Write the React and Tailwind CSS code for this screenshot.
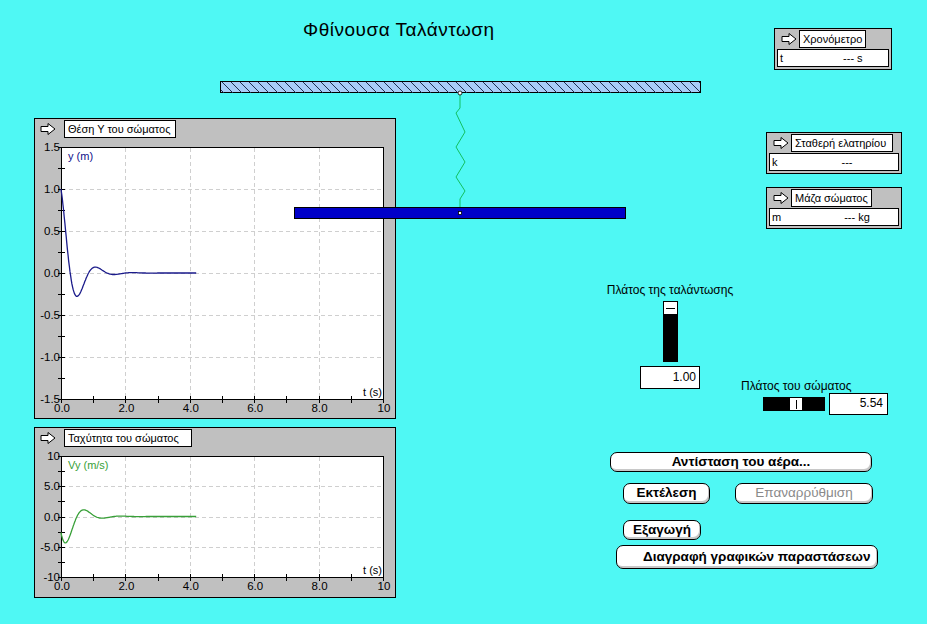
import React from 'react'

const font = { fontFamily: '"Liberation Sans", Arial, sans-serif' }

const Arrow = () => (
    <svg width="16" height="12" viewBox="0 0 16 12" className="shrink-0">
        <polygon
            points="1,3.5 8,3.5 8,0.5 15,6 8,11.5 8,8.5 1,8.5"
            fill="white"
            stroke="black"
            strokeWidth="1"
        />
    </svg>
)

const TabLabel = ({ children, width }) => (
    <div
        className="h-[18px] border border-black bg-white px-[3px] text-[11px] leading-[16px] text-black whitespace-nowrap"
        style={{ width }}
    >
        {children}
    </div>
)

// damped oscillation, y(t) and its velocity
const K = 2.4
const W = 5.5
const yAt = (t) => Math.exp(-K * t) * Math.cos(W * t)
const vAt = (t) => -Math.exp(-K * t) * (K * Math.cos(W * t) + W * Math.sin(W * t)) * 1.1

const Chart = ({ height, plotH, yTicks, yLabels, fn, yMin, yMax, color, label, labelColor }) => {
    const px = 26
    const py = 10
    const pw = 322
    const toX = (t) => px + (t / 10) * pw
    const toY = (v) => py + ((yMax - v) / (yMax - yMin)) * plotH
    const pts = []
    for (let t = 0; t <= 4.2; t += 0.02) pts.push(`${toX(t).toFixed(1)},${toY(fn(t)).toFixed(1)}`)
    const divs = yLabels.length - 1
    return (
        <svg width="360" height={height} className="block" style={font}>
            <rect x={px + 0.5} y={py + 0.5} width={pw} height={plotH} fill="white" stroke="black" />
            {[1, 2, 3, 4].map((i) => (
                <line
                    key={'gx' + i}
                    x1={Math.round(px + (i * pw) / 5) + 0.5}
                    x2={Math.round(px + (i * pw) / 5) + 0.5}
                    y1={py + 1}
                    y2={py + plotH}
                    stroke="#cfcfcf"
                    strokeDasharray="4 3"
                />
            ))}
            {yLabels.slice(1, -1).map((_, i) => (
                <line
                    key={'gy' + i}
                    x1={px + 1}
                    x2={px + pw}
                    y1={Math.round(py + ((i + 1) * plotH) / divs) + 0.5}
                    y2={Math.round(py + ((i + 1) * plotH) / divs) + 0.5}
                    stroke="#cfcfcf"
                    strokeDasharray="4 3"
                />
            ))}
            {Array.from({ length: yTicks + 1 }).map((_, i) => {
                const y = Math.round(py + (i * plotH) / yTicks) + 0.5
                return <line key={'ty' + i} x1={px - 3} x2={px + 4} y1={y} y2={y} stroke="black" />
            })}
            {Array.from({ length: 11 }).map((_, i) => {
                const x = Math.round(toX(i)) + 0.5
                return <line key={'tx' + i} x1={x} x2={x} y1={py + plotH - 3} y2={py + plotH + 4} stroke="black" />
            })}
            {yLabels.map((l, i) => (
                <text
                    key={'ly' + i}
                    x={px - 1}
                    y={py + (i * plotH) / divs + 4}
                    fontSize="11.5"
                    textAnchor="end"
                    fill="black"
                >
                    {l}
                </text>
            ))}
            {['0.0', '2.0', '4.0', '6.0', '8.0', '10'].map((l, i) => (
                <text key={'lx' + i} x={toX(i * 2) + 1} y={py + plotH + 13} fontSize="11.5" textAnchor="middle" fill="black">
                    {l}
                </text>
            ))}
            <text x={px + pw - 1} y={py + plotH - 3} fontSize="11" textAnchor="end" fill="black">
                t (s)
            </text>
            <text x={px + 7} y={py + 13} fontSize="11" fill={labelColor}>
                {label}
            </text>
            <polyline points={pts.join(' ')} fill="none" stroke={color} strokeWidth="1.3" />
        </svg>
    )
}

const GraphPanel = ({ height, title, titleWidth, children }) => (
    <div className="w-[362px] border border-black bg-[#c0c0c0]" style={{ height }}>
        <div className="flex h-[18px] items-center gap-[8px] pt-[1px] pl-[5px]">
            <Arrow />
            <TabLabel width={titleWidth}>{title}</TabLabel>
        </div>
        {children}
    </div>
)

const InfoBox = ({ className = '', title, titleWidth, name, value, valueGap }) => (
    <div className={`flex h-[42px] flex-col border border-black bg-[#c0c0c0] ${className}`}>
        <div className="flex items-center gap-[2px] pt-[1px] pl-[6px]">
            <Arrow />
            <TabLabel width={titleWidth}>{title}</TabLabel>
        </div>
        <div className="mx-[2px] mt-[1px] flex h-[18px] border border-black bg-white pl-[2px] text-[11px] leading-[16px]">
            <span>{name}</span>
            <span style={{ marginLeft: valueGap }}>{value}</span>
        </div>
    </div>
)

const Button = ({ className = '', children, muted }) => (
    <button
        className={`flex items-center rounded-[7px] border border-black bg-white text-[13.5px] font-bold shadow-[inset_-1px_-2px_0_#c8c8c8] ${
            muted ? 'text-[#8a8a8a] font-normal' : 'text-black'
        } ${className}`}
        style={font}
    >
        {children}
    </button>
)

const SpringRig = () => {
    const hatch = []
    for (let x = 212; x < 700; x += 9) hatch.push(x)
    return (
        <svg className="pointer-events-none absolute left-0 top-0" width="927" height="240">
            <defs>
                <clipPath id="ceil">
                    <rect x="221" y="82" width="479" height="11" />
                </clipPath>
            </defs>
            <rect x="220.5" y="81.5" width="480" height="11" fill="#a9cdf7" stroke="black" />
            <g clipPath="url(#ceil)">
                {hatch.map((x) => (
                    <line key={x} x1={x} y1="81" x2={x + 12} y2="93" stroke="#1e3050" strokeWidth="1" />
                ))}
            </g>
            <polyline
                points="460,93 460,108 456,113 465,132 456,147 465,162 456,177 465,191 460,199 460,213"
                fill="none"
                stroke="#12c060"
                strokeWidth="1"
            />
            <rect x="294.5" y="207.5" width="331" height="11" fill="#0000c8" stroke="black" />
            <circle cx="460" cy="93" r="2" fill="white" stroke="black" strokeWidth="0.8" />
            <rect x="458.5" y="211.5" width="3" height="3" fill="white" stroke="black" strokeWidth="0.8" />
        </svg>
    )
}

export default function App() {
    return (
        <div className="relative flex h-[624px] w-[927px] overflow-hidden bg-[#4ff8f4] text-black" style={font}>
            {/* left column: title and graphs */}
            <div className="flex w-[396px] shrink-0 flex-col pl-[34px] pt-[19px]">
                <div className="whitespace-nowrap pl-[269px] text-[19px] leading-[22px] tracking-[0.5px]">
                    Φθίνουσα Ταλάντωση
                </div>
                <div className="mt-[77px] flex flex-col gap-[8px]">
                    <GraphPanel height={301} title="Θέση Υ του σώματος" titleWidth={112}>
                        <Chart
                            height={281}
                            plotH={252}
                            yTicks={12}
                            yLabels={['1.5', '1.0', '0.5', '0.0', '-0.5', '-1.0', '-1.5']}
                            fn={yAt}
                            yMin={-1.5}
                            yMax={1.5}
                            color="#1a1a8a"
                            label="y (m)"
                            labelColor="#10108a"
                        />
                    </GraphPanel>
                    <GraphPanel height={171} title="Ταχύτητα  του σώματος" titleWidth={128}>
                        <Chart
                            height={151}
                            plotH={121}
                            yTicks={8}
                            yLabels={['10', '5.0', '0.0', '-5.0', '-10']}
                            fn={vAt}
                            yMin={-10}
                            yMax={10}
                            color="#38a038"
                            label="Vy (m/s)"
                            labelColor="#38a038"
                        />
                    </GraphPanel>
                </div>
            </div>

            {/* right column: readouts, sliders, buttons */}
            <div className="flex flex-1 flex-col">
                <div className="flex flex-col items-end pr-[25px] pt-[28px]">
                    <InfoBox
                        className="mr-[10px] w-[118px]"
                        title="Χρονόμετρο"
                        titleWidth={67}
                        name="t"
                        value="--- s"
                        valueGap={60}
                    />
                    <InfoBox
                        className="mt-[62px] w-[136px]"
                        title="Σταθερή ελατηρίου"
                        titleWidth={102}
                        name="k"
                        value="---"
                        valueGap={64}
                    />
                    <InfoBox
                        className="mt-[13px] w-[136px]"
                        title="Μάζα σώματος"
                        titleWidth={81}
                        name="m"
                        value="--- kg"
                        valueGap={63}
                    />
                </div>

                <div className="mt-[54px] flex items-start pl-[204px]">
                    <div className="flex w-[140px] flex-col items-center">
                        <div className="whitespace-nowrap text-[12px] leading-[14px]">Πλάτος της ταλάντωσης</div>
                        <div className="mt-[4px] flex h-[61px] w-[15px] justify-center bg-black pt-[1px]">
                            <div className="flex h-[12px] w-[13px] items-center justify-center bg-white">
                                <div className="h-[1px] w-[9px] bg-black" />
                            </div>
                        </div>
                        <div className="mt-[4px] h-[23px] w-[60px] border border-black bg-white pr-[3px] text-right text-[12px] leading-[20px]">
                            1.00
                        </div>
                    </div>
                    <div className="ml-[1px] mt-[96px] flex flex-col">
                        <div className="whitespace-nowrap text-[12px] leading-[14px]">Πλάτος του σώματος</div>
                        <div className="flex items-center gap-[4px] pl-[22px]">
                            <div className="flex h-[14px] w-[62px] items-center bg-black pl-[27px]">
                                <div className="flex h-[12px] w-[12px] items-center justify-center bg-white">
                                    <div className="h-[9px] w-[1px] bg-black" />
                                </div>
                            </div>
                            <div className="h-[22px] w-[59px] border border-black bg-white pr-[4px] text-right text-[12px] leading-[19px]">
                                5.54
                            </div>
                        </div>
                    </div>
                </div>

                <div className="mt-[37px] flex flex-col items-start pl-[214px]">
                    <Button className="h-[20px] w-[262px] justify-center">Αντίσταση του αέρα...</Button>
                    <div className="mt-[11px] flex gap-[25px] pl-[13px]">
                        <Button className="h-[21px] w-[87px] justify-center">Εκτέλεση</Button>
                        <Button className="h-[21px] w-[138px] justify-center" muted>
                            Επαναρρύθμιση
                        </Button>
                    </div>
                    <Button className="ml-[13px] mt-[16px] h-[20px] w-[78px] justify-center">Εξαγωγή</Button>
                    <Button className="ml-[6px] mt-[5px] h-[24px] w-[262px] justify-start pl-[26px]">
                        Διαγραφή γραφικών παραστάσεων
                    </Button>
                </div>
            </div>

            <SpringRig />
        </div>
    )
}
